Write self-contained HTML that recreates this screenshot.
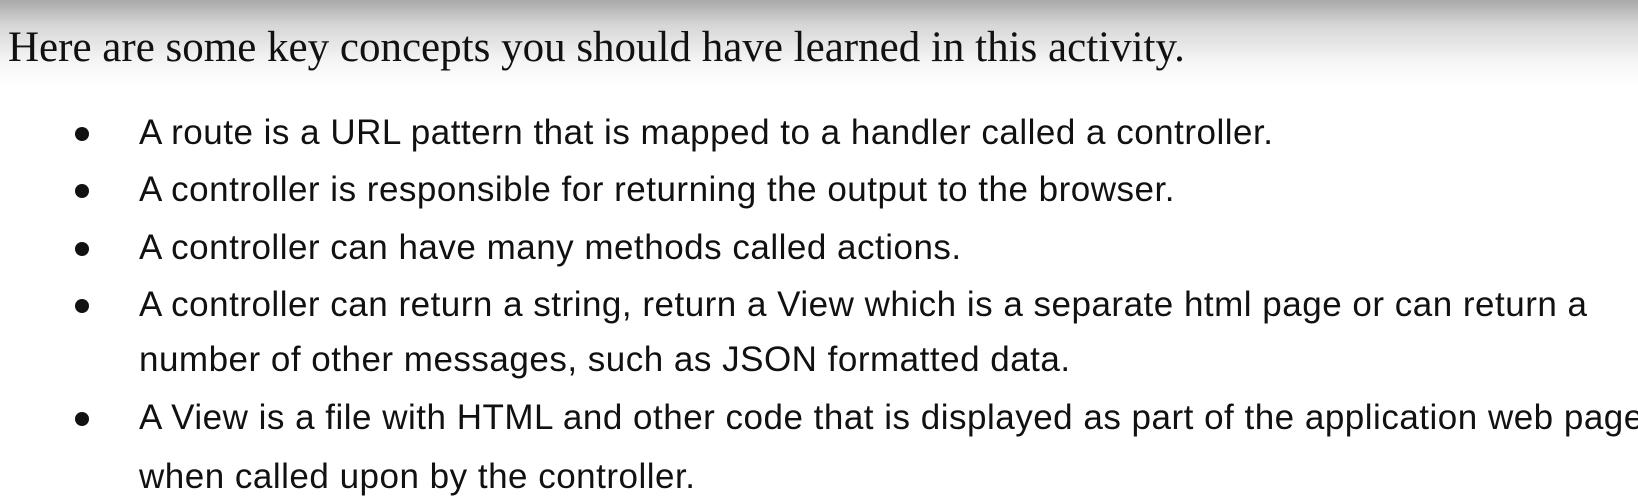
<!DOCTYPE html>
<html style="background:#fff"><head><meta charset="utf-8"><style>
html,body{margin:0;padding:0}
body{width:1638px;height:466px;overflow:hidden;position:relative;background:linear-gradient(to bottom,#a9a9a9 0px,#d6d6d6 25px,#f4f4f4 60px,#fff 85px,#fff 100%) no-repeat;background-size:1638px 466px;font-family:"Liberation Sans",sans-serif;color:#111}
.h{position:absolute;left:8px;top:23px;font-family:"Liberation Serif",serif;font-size:43px;white-space:nowrap;color:#111}
.l{position:absolute;left:139px;font-size:35px;white-space:nowrap;letter-spacing:0.5px}
.b{position:absolute;left:75px;width:14px;height:14px;border-radius:50%;background:#111}
</style></head><body>
<div class="h">Here are some key concepts you should have learned in this activity.</div>
<div class="b" style="top:127px"></div><div class="l" style="top:113px">A route is a URL pattern that is mapped to a handler called a controller.</div>
<div class="b" style="top:184px"></div><div class="l" style="top:170px">A controller is responsible for returning the output to the browser.</div>
<div class="b" style="top:242px"></div><div class="l" style="top:228px">A controller can have many methods called actions.</div>
<div class="b" style="top:299px"></div><div class="l" style="top:285px">A controller can return a string, return a View which is a separate html page or can return a</div>
<div class="l" style="top:340px">number of other messages, such as JSON formatted data.</div>
<div class="b" style="top:412px"></div><div class="l" style="top:398px">A View is a file with HTML and other code that is displayed as part of the application web page</div>
<div class="l" style="top:457px">when called upon by the controller.</div>
</body></html>
